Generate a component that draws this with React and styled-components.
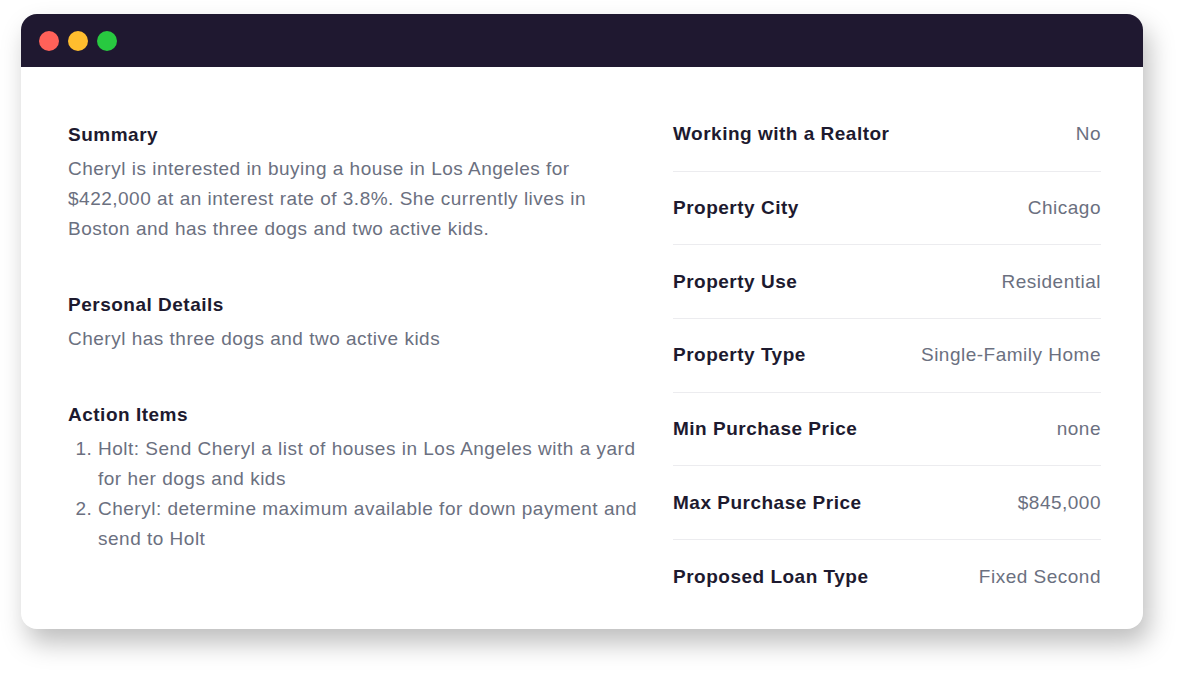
import React from "react";
import styled, { createGlobalStyle } from "styled-components";

const Global = createGlobalStyle`
  html, body { margin: 0; padding: 0; background: #ffffff; }
  body { font-family: "Liberation Sans", Arial, Helvetica, sans-serif; }
  * { box-sizing: border-box; }
`;

const Page = styled.div`
  padding: 14px 39px 46px 21px;
`;

const Window = styled.div`
  width: 1122px;
  background: #ffffff;
  border-radius: 16px;
  overflow: hidden;
  box-shadow: 6px 14px 26px rgba(0, 0, 0, 0.26);
`;

const TitleBar = styled.div`
  height: 53px;
  background: #1f1830;
  display: flex;
  align-items: center;
  gap: 9px;
  padding-left: 18px;
`;

const Dot = styled.span`
  width: 20px;
  height: 20px;
  border-radius: 50%;
  background: ${(p) => p.$color};
`;

const Body = styled.div`
  display: grid;
  grid-template-columns: 575px 428px;
  column-gap: 30px;
  padding: 31px 42px 15px 47px;
  font-size: 19px;
  letter-spacing: 0.5px;
`;

const LeftCol = styled.div`
  padding-top: 22px;
  display: flex;
  flex-direction: column;
  gap: 46px;
`;

const Section = styled.section`
  display: flex;
  flex-direction: column;
`;

const Heading = styled.h3`
  margin: 0 0 4px;
  font-size: 19px;
  line-height: 30px;
  font-weight: 700;
  color: #1d1a2f;
`;

const Text = styled.p`
  margin: 0;
  font-size: 19px;
  line-height: 30px;
  color: #6b7080;
`;

const List = styled.ol`
  margin: 0;
  padding-left: 30px;
  font-size: 19px;
  line-height: 30px;
  color: #6b7080;
`;

const RightCol = styled.div`
  display: flex;
  flex-direction: column;
`;

const Row = styled.div`
  height: 73.67px;
  display: flex;
  align-items: center;
  justify-content: space-between;
  border-bottom: 1px solid #ececef;
  &:last-child { border-bottom: none; }
`;

const Label = styled.span`
  font-size: 19px;
  font-weight: 700;
  color: #1d1a2f;
`;

const Value = styled.span`
  font-size: 19px;
  color: #6b7080;
`;

const rows = [
  ["Working with a Realtor", "No"],
  ["Property City", "Chicago"],
  ["Property Use", "Residential"],
  ["Property Type", "Single-Family Home"],
  ["Min Purchase Price", "none"],
  ["Max Purchase Price", "$845,000"],
  ["Proposed Loan Type", "Fixed Second"],
];

export default function App() {
  return (
    <>
      <Global />
      <Page>
        <Window>
          <TitleBar>
            <Dot $color="#ff6159" />
            <Dot $color="#ffbd2e" />
            <Dot $color="#28c940" />
          </TitleBar>
          <Body>
            <LeftCol>
              <Section>
                <Heading>Summary</Heading>
                <Text>
                  Cheryl is interested in buying a house in Los Angeles for
                  $422,000 at an interest rate of 3.8%. She currently lives in
                  Boston and has three dogs and two active kids.
                </Text>
              </Section>
              <Section>
                <Heading>Personal Details</Heading>
                <Text>Cheryl has three dogs and two active kids</Text>
              </Section>
              <Section>
                <Heading>Action Items</Heading>
                <List>
                  <li>Holt: Send Cheryl a list of houses in Los Angeles with a yard for her dogs and kids</li>
                  <li>Cheryl: determine maximum available for down payment and send to Holt</li>
                </List>
              </Section>
            </LeftCol>
            <RightCol>
              {rows.map(([l, v]) => (
                <Row key={l}>
                  <Label>{l}</Label>
                  <Value>{v}</Value>
                </Row>
              ))}
            </RightCol>
          </Body>
        </Window>
      </Page>
    </>
  );
}
